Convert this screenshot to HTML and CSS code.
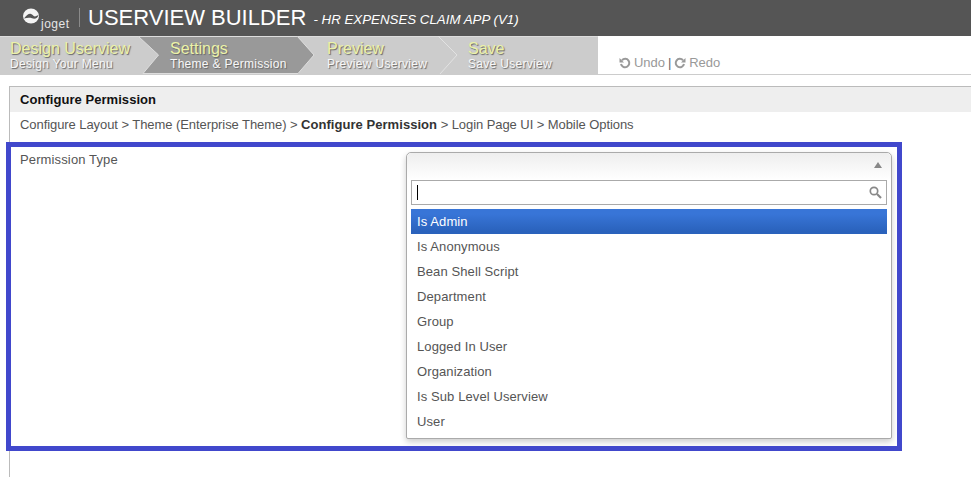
FILE: index.html
```html
<!DOCTYPE html>
<html lang="en">
<head>
<meta charset="utf-8">
<title>Userview Builder</title>
<link rel="stylesheet" href="styles.css">
</head>
<body>
<header class="topbar">
  <div class="logo">
    <svg class="logo-mark" width="18" height="16" viewBox="0 0 18 16">
      <ellipse cx="9" cy="8" rx="8" ry="7.4" fill="#f4f4f4"/>
      <path d="M2 10.5 C5 7 7.5 4.5 10 6.5 C11.5 7.8 12 8.5 13 8.5 L16.5 7 C16 10 13 11.5 10 10.3 C8 9.5 5 9.7 2 10.5Z" fill="#555"/>
    </svg>
    <span class="logo-text">joget</span>
  </div>
  <h1 class="title">USERVIEW BUILDER</h1>
  <span class="subtitle">- HR EXPENSES CLAIM APP (V1)</span>
</header>
<nav class="stepbar">
  <div class="steps">
    <div class="step step-first"><b>Design Userview</b><small>Design Your Menu</small></div>
    <div class="step step-active">
      <svg class="active-bg" width="178" height="38" viewBox="0 0 178 38"><path d="M0.5 0.5H159.5L176 19L160 37.5H5L20.5 19Z" fill="#999" stroke="#ddd"/></svg>
      <b>Settings</b><small>Theme &amp; Permission</small>
    </div>
    <div class="step step-preview">
      <svg class="chevron" width="24" height="38" viewBox="0 0 24 38"><path d="M1 0L20 19L3 38" fill="none" stroke="#e2e2e2"/></svg>
      <b>Preview</b><small>Preview Userview</small>
    </div>
    <div class="step step-save"><b>Save</b><small>Save Userview</small></div>
  </div>
  <div class="history">
    <svg class="hist-icon" width="12" height="12" viewBox="0 0 12 12"><path d="M3 3.2A4.2 4.2 0 1 1 2 7" fill="none" stroke="#999" stroke-width="2"/><path d="M0.5 1V5.5H5Z" fill="#999"/></svg>
    <span class="hist-link">Undo</span><span class="hist-sep">|</span>
    <svg class="hist-icon" width="12" height="12" viewBox="0 0 12 12"><path d="M9 3.2A4.2 4.2 0 1 0 10 7" fill="none" stroke="#999" stroke-width="2"/><path d="M11.5 1V5.5H7Z" fill="#999"/></svg>
    <span class="hist-link">Redo</span>
  </div>
</nav>
<main class="panel">
  <h2 class="panel-title">Configure Permission</h2>
  <p class="crumbs">Configure Layout &gt; Theme (Enterprise Theme) &gt; <strong>Configure Permission</strong> &gt; Login Page UI &gt; Mobile Options</p>
  <div class="field">
    <label class="field-label">Permission Type</label>
    <div class="select">
      <div class="select-head"><span class="caret"></span></div>
      <div class="search">
        <span class="text-caret"></span>
        <svg class="search-icon" width="13" height="13" viewBox="0 0 13 13"><circle cx="5" cy="5" r="3.7" fill="none" stroke="#888" stroke-width="1.7"/><path d="M8 8L12 12" stroke="#888" stroke-width="2.2"/></svg>
      </div>
      <ul class="options">
        <li class="option option-on">Is Admin</li>
        <li class="option">Is Anonymous</li>
        <li class="option">Bean Shell Script</li>
        <li class="option">Department</li>
        <li class="option">Group</li>
        <li class="option">Logged In User</li>
        <li class="option">Organization</li>
        <li class="option">Is Sub Level Userview</li>
        <li class="option">User</li>
      </ul>
    </div>
  </div>
</main>
<div class="highlight"></div>
</body>
</html>
```
FILE: styles.css
```css
* { box-sizing: border-box; }
html, body { margin: 0; padding: 0; height: 477px; overflow: hidden; background: #fff; }
body { font-family: "Liberation Sans", Arial, sans-serif; font-size: 13px; color: #555; position: relative; }

.topbar { height: 36px; background: #555; color: #fff; display: flex; align-items: center; padding-left: 22px; }
.logo { display: flex; align-items: flex-end; width: 58px; height: 19px; border-right: 1px solid #8a8a8a; position: relative; margin-top: -1px; }
.logo-mark { margin-bottom: 3px; }
.logo-text { font-size: 12px; letter-spacing: .5px; line-height: 12px; color: #e6e6e6; margin-bottom: -3px; margin-left: 1px; }
.title { margin: 0 0 0 8px; font-size: 22px; font-weight: 400; white-space: nowrap; }
.subtitle { margin: 3px 0 0 7px; font-size: 13.3px; font-style: italic; white-space: nowrap; }

.stepbar { display: flex; height: 39px; border-bottom: 1px solid #ccc; }
.steps { width: 598px; height: 38px; background: #ccc; border-top: 1px solid #ddd; display: flex; position: relative; }
.step { position: relative; padding: 3px 0 0 0; white-space: nowrap; text-shadow: 1px 1px 1px #666; }
.step b { display: block; font-weight: 400; font-size: 16px; line-height: 18px; color: #ecf2a8; position: relative; }
.step small { display: block; font-size: 12px; line-height: 12px; letter-spacing: .3px; color: #f8f8f8; position: relative; }
.step-first { width: 170px; padding-left: 10px; }
.step-active { width: 157px; }
.step-preview { width: 141px; }
.step-save { flex: 1; }
.active-bg { position: absolute; left: -32px; top: -1px; }
.chevron { position: absolute; left: 110px; top: -1px; }

.history { display: flex; align-items: center; height: 38px; padding: 15px 0 0 21px; color: #999; font-size: 13px; letter-spacing: -.05px; }
.hist-icon { margin-right: 3px; }
.hist-sep { margin: 0 3px; color: #666; }

.panel { margin: 11px 0 0 9px; height: 391px; border-left: 1px solid #bbb; border-top: 1px solid #bbb; }
.panel-title { margin: 0; height: 25px; background: #eee; font-size: 13px; line-height: 26px; color: #111; padding-left: 10px; font-weight: 700; letter-spacing: .05px; }
.crumbs { margin: 0; padding: 5px 0 0 10px; line-height: 15px; height: 24px; letter-spacing: -.07px; }
.crumbs strong { color: #333; letter-spacing: .05px; }
.field { display: flex; margin-top: 16px; padding-left: 10px; }
.field-label { width: 386px; line-height: 15px; letter-spacing: .13px; }
.select { width: 486px; height: 287px; border: 1px solid #aaa; border-radius: 5px 5px 2px 2px; box-shadow: 0 3px 6px rgba(0,0,0,.2); background: #fff; padding: 0 4px; }
.select-head { height: 27px; margin: 0 -4px; background: linear-gradient(#eee, #fff); border-radius: 5px 5px 0 0; position: relative; }
.caret { position: absolute; right: 9px; top: 9px; width: 0; height: 0; border-left: 4px solid transparent; border-right: 4px solid transparent; border-bottom: 6px solid #888; }
.search { height: 25px; border: 1px solid #aaa; display: flex; align-items: center; justify-content: space-between; padding: 0 4px 0 5px; }
.text-caret { width: 1px; height: 15px; background: #000; }
.options { list-style: none; margin: 4px 0 0; padding: 0; }
.option { height: 25px; line-height: 25px; padding-left: 6px; color: #555; letter-spacing: .1px; }
.option-on { background: linear-gradient(#3875d7 20%, #2a62bc 90%); color: #fff; }

.highlight { position: absolute; left: 6px; top: 142px; width: 896px; height: 309px; border: 5px solid #4148cc; pointer-events: none; }
```
